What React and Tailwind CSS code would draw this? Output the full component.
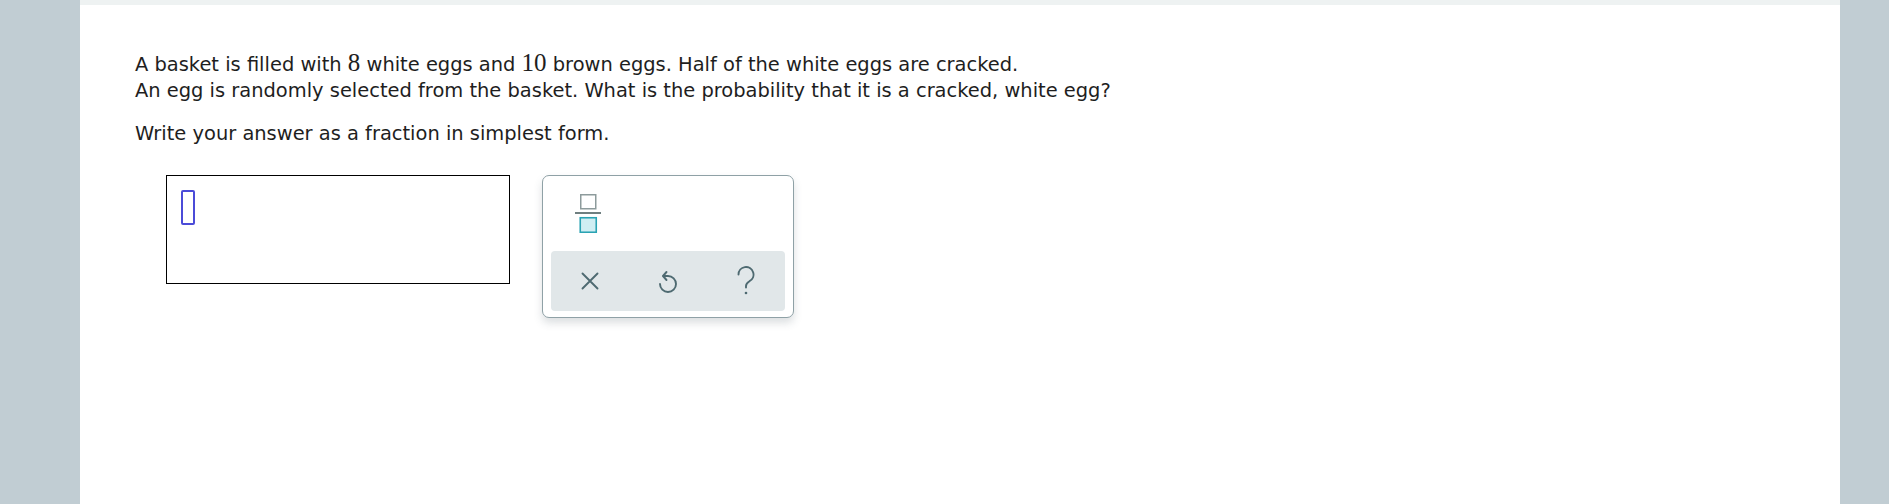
import React from 'react';

const Num = ({ children }) => (
  <span className="font-['Liberation_Serif','Times_New_Roman',serif] text-[25px] leading-none">{children}</span>
);

const FractionIcon = () => (
  <svg width="26" height="39" viewBox="0 0 26 39">
    <rect x="5.75" y="0.75" width="15" height="14" fill="#fff" stroke="#8d9b9c" strokeWidth="1.5" />
    <rect x="0" y="18" width="26" height="2" fill="#6f7f80" />
    <rect x="5.25" y="23.75" width="16" height="14.5" fill="#cfeef3" stroke="#2aa3b3" strokeWidth="1.6" />
  </svg>
);

const ClearIcon = () => (
  <svg width="20" height="20" viewBox="0 0 20 20" fill="none" stroke="#4e6a71" strokeWidth="1.9" strokeLinecap="round">
    <path d="M2.5 2.5 L17.5 17.5 M17.5 2.5 L2.5 17.5" />
  </svg>
);

const UndoIcon = () => (
  <svg width="22" height="27" viewBox="0 0 22 27" fill="none" stroke="#4e6a71" strokeWidth="1.9" strokeLinecap="round" strokeLinejoin="round">
    <path d="M6.5 8 H11 A8 8 0 1 1 3 16" />
    <path d="M9.5 4 L6 8 L9.5 12" />
  </svg>
);

const HelpIcon = () => (
  <svg width="22" height="30" viewBox="0 0 22 30" fill="none" stroke="#4e6a71" strokeWidth="1.9" strokeLinecap="round">
    <path d="M3.5 8.5 A7.5 7.5 0 1 1 14.5 15.2 C12.2 16.6 11 17.8 11 20 V21.5" />
    <circle cx="11" cy="27" r="1.3" fill="#4e6a71" stroke="none" />
  </svg>
);

const Key = ({ children }) => (
  <button className="w-[78px] h-full flex items-center justify-center">{children}</button>
);

export default function App() {
  return (
    <div className="flex h-[504px] bg-[#c1cdd3] overflow-hidden">
      <div className="ml-[80px] w-[1760px] bg-white border-t-[5px] border-[#eef2f2]">
        <div className="pl-[55px] pt-[45px] font-['DejaVu_Sans',Verdana,sans-serif] text-[19.45px] leading-[26px] text-[#1e1e1e]">
          <p>
            A basket is filled with <Num>8</Num> white eggs and <Num>10</Num> brown eggs. Half of the white eggs are cracked.
            <br />
            An egg is randomly selected from the basket. What is the probability that it is a cracked, white egg?
          </p>
          <p className="mt-[17px]">Write your answer as a fraction in simplest form.</p>

          <div className="flex items-start mt-[28px] ml-[31px] gap-[32px]">
            <div className="w-[344px] h-[109px] border border-black pl-[14px] pt-[14px]">
              <div className="w-[14px] h-[35px] border-2 border-[#4b4bd8] rounded-[2px]" />
            </div>

            <div className="w-[252px] h-[143px] border border-[#8fa1a6] rounded-[7px] bg-white shadow-[0_5px_9px_rgba(60,80,90,0.18)] flex flex-col">
              <div className="h-[75px] pl-[6px] pt-[18px] flex">
                <div className="w-[78px] flex justify-center">
                  <FractionIcon />
                </div>
              </div>
              <div className="mx-[8px] h-[60px] bg-[#e1e7e9] rounded-[4px] flex">
                <Key><ClearIcon /></Key>
                <Key><UndoIcon /></Key>
                <Key><HelpIcon /></Key>
              </div>
            </div>
          </div>
        </div>
      </div>
    </div>
  );
}
